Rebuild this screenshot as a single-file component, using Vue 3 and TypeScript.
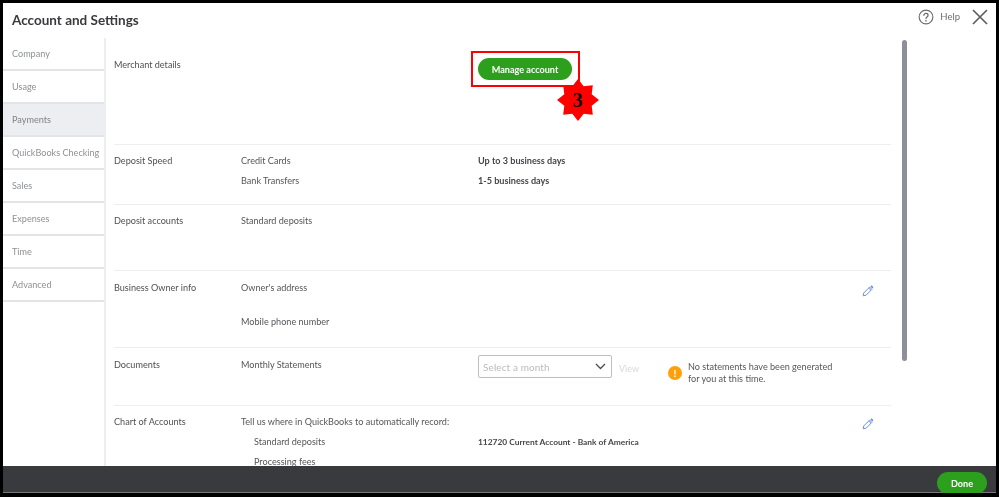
<script setup lang="ts">
const navItems = ['Company', 'Usage', 'Payments', 'QuickBooks Checking', 'Sales', 'Expenses', 'Time', 'Advanced']
const activeItem = 'Payments'
</script>

<template>
  <div class="frame">
    <header class="top">
      <h1 class="title">Account and Settings</h1>
      <div class="top-actions">
        <svg class="help-icon" width="16" height="16" viewBox="0 0 17 17" fill="none">
          <circle cx="8.5" cy="8.5" r="7.3" stroke="#6b6c72" stroke-width="1.2" />
          <path d="M6.3 6.7c0-1.3 1-2.1 2.2-2.1s2.2.8 2.2 2c0 1.900-2.200 1.800-2.200 3.600" stroke="#6b6c72" stroke-width="1.300" stroke-linecap="round" />
          <circle cx="8.500" cy="12.500" r=".9" fill="#6b6c72" />
        </svg>
        <span class="help">Help</span>
        <svg class="close-icon" width="16" height="16" viewBox="0 0 16 16" fill="none">
          <path d="M1 1l14 14M15 1L1 15" stroke="#5d5f66" stroke-width="1.700" />
        </svg>
      </div>
    </header>

    <div class="body">
      <nav class="side">
        <div
          v-for="item in navItems"
          :key="item"
          class="side-item"
          :class="{ active: item === activeItem }"
        >{{ item }}</div>
      </nav>

      <main class="content">
        <div class="rows">
          <section class="row row-merchant">
            <div class="label">Merchant details</div>
            <div></div>
            <div class="cell-action">
              <button class="green-btn" type="button">Manage account</button>
              <div class="callout"></div>
              <div class="star">
                <svg width="44" height="44" viewBox="0 0 44 44">
                  <polygon fill="#fe0000" points="22,1 27.700,8.300 36.800,7.200 35.700,16.300 43,22 35.700,27.700 36.800,36.800 27.700,35.700 22,43 16.300,35.700 7.200,36.800 8.300,27.700 1,22 8.300,16.300 7.200,7.200 16.300,8.300" />
                </svg>
                <span class="star-num">3</span>
              </div>
            </div>
          </section>

          <section class="row row-speed">
            <div class="label">Deposit Speed</div>
            <div class="stack">
              <div>Credit Cards</div>
              <div>Bank Transfers</div>
            </div>
            <div class="stack strong">
              <div>Up to 3 business days</div>
              <div>1-5 business days</div>
            </div>
          </section>

          <section class="row row-accounts">
            <div class="label">Deposit accounts</div>
            <div>Standard deposits</div>
            <div></div>
          </section>

          <section class="row row-owner">
            <div class="label">Business Owner info</div>
            <div class="stack wide">
              <div>Owner's address</div>
              <div>Mobile phone number</div>
            </div>
            <div class="edit-cell">
              <svg class="pencil" width="12" height="12" viewBox="0 0 12 12" fill="none">
                <path d="M1.200 10.800l.6-2.900 5.800-5.800 2.300 2.300-5.800 5.800zM6.700 3l2.300 2.300" stroke="#6f8fd8" stroke-width="1" stroke-linejoin="round" />
                <path d="M8.300 1.400l.7-.6c.4-.3.800-.3 1.100 0l1 1c.3.300.3.700 0 1l-.7.700z" fill="#6f8fd8" />
              </svg>
            </div>
          </section>

          <section class="row row-docs">
            <div class="label">Documents</div>
            <div>Monthly Statements</div>
            <div class="docs">
              <div class="select">
                <span>Select a month</span>
                <svg width="11" height="7" viewBox="0 0 11 7" fill="none">
                  <path d="M1 1l4.500 4.500L10 1" stroke="#4a4b50" stroke-width="1.300" />
                </svg>
              </div>
              <span class="view">View</span>
              <div class="notice">
                <span class="warn">!</span>
                <p>No statements have been generated<br />for you at this time.</p>
              </div>
            </div>
          </section>

          <section class="row row-chart">
            <div class="label">Chart of Accounts</div>
            <div class="chart-span">
              <div class="chart-head">
                <span>Tell us where in QuickBooks to automatically record:</span>
                <svg class="pencil" width="12" height="12" viewBox="0 0 12 12" fill="none">
                  <path d="M1.200 10.800l.6-2.900 5.800-5.800 2.300 2.300-5.800 5.800zM6.700 3l2.300 2.300" stroke="#6f8fd8" stroke-width="1" stroke-linejoin="round" />
                  <path d="M8.300 1.400l.7-.6c.4-.3.800-.3 1.100 0l1 1c.3.300.3.700 0 1l-.7.700z" fill="#6f8fd8" />
                </svg>
              </div>
              <div class="chart-line">
                <span class="sub">Standard deposits</span>
                <span class="strong account">112720 Current Account - Bank of America</span>
              </div>
              <div class="chart-line">
                <span class="sub">Processing fees</span>
              </div>
            </div>
          </section>
        </div>
        <div class="scroll-track"><div class="scroll-thumb"></div></div>
      </main>
    </div>

    <footer class="bottom">
      <button class="green-btn done" type="button">Done</button>
    </footer>
  </div>
</template>

<style>
html, body {
  margin: 0;
  background: #000;
}
</style>

<style scoped>
.frame {
  width: 999px;
  height: 497px;
  box-sizing: border-box;
  border-style: solid;
  border-color: #000;
  border-width: 3px 3px 4px 3px;
  background: #fff;
  display: grid;
  grid-template-rows: 35px 1fr 27px;
  font-family: Lato, "Open Sans", sans-serif;
  font-size: 9.1px;
  color: #55565b;
  overflow: hidden;
  filter: blur(0.3px);
}

.top {
  display: flex;
  align-items: center;
  justify-content: space-between;
  padding: 0 8px 0 9px;
}

.title {
  margin: 0;
  margin-top: -2px;
  font-size: 13.5px;
  font-weight: 700;
  color: #393a3d;
}

.top-actions {
  display: flex;
  align-items: center;
  margin-top: -8px;
}

.help {
  margin: 0 12px 0 6px;
  font-size: 9.5px;
  color: #6b6c72;
}

.body {
  display: flex;
  min-height: 0;
  overflow: hidden;
}

.side {
  width: 103px;
  box-sizing: border-box;
  flex: none;
  border-right: 2px solid #eceef1;
}

.side-item {
  height: 31px;
  padding-left: 9px;
  line-height: 31px;
  border-bottom: 2px solid #e3e4e7;
  color: #8d9096;
  white-space: nowrap;
}

.side-item.active {
  background: #eceef1;
  color: #818388;
}

.content {
  flex: 1;
  display: flex;
  min-width: 0;
}

.rows {
  width: 777px;
  margin-left: 8px;
  padding-top: 1px;
  flex: none;
}

.row {
  display: grid;
  grid-template-columns: 127px 237px 1fr;
  box-sizing: border-box;
  border-bottom: 1px solid #eceef1;
  padding-top: 6px;
  line-height: 20px;
}

.label {
  color: #4f5055;
}

.row-merchant {
  height: 106px;
  padding-top: 16px;
}

.row-speed {
  height: 60px;
}

.row-accounts {
  height: 66px;
}

.row-owner {
  height: 77px;
  padding-top: 7px;
}

.row-docs {
  height: 58px;
  padding-top: 7px;
}

.row-chart {
  border-bottom: 0;
}

.stack {
  display: flex;
  flex-direction: column;
}

.stack.wide {
  gap: 14px;
}

.strong {
  font-weight: 700;
  color: #45464b;
}

.account {
  font-size: 8.4px;
}

.cell-action {
  position: relative;
}

.green-btn {
  display: block;
  border: 0;
  padding: 0;
  border-radius: 11px;
  background: #2ca01c;
  color: #fff;
  font-family: inherit;
  font-size: 9.1px;
  font-weight: 700;
}

.cell-action .green-btn {
  width: 94px;
  height: 22px;
  margin-top: 3px;
}

.callout {
  position: absolute;
  left: -7px;
  top: -4px;
  width: 105px;
  height: 32px;
  border: 2px solid #fe0000;
}

.star {
  position: absolute;
  left: 78px;
  top: 23px;
  width: 44px;
  height: 44px;
}

.star svg {
  display: block;
}

.star-num {
  position: absolute;
  inset: 0;
  text-align: center;
  line-height: 44px;
  font-family: "Liberation Serif", serif;
  font-size: 20px;
  font-weight: 700;
  color: #000;
}

.edit-cell {
  display: flex;
  justify-content: flex-end;
  padding: 7px 17px 0 0;
}

.pencil {
  display: block;
}

.docs {
  display: flex;
  align-items: flex-start;
}

.select {
  box-sizing: border-box;
  width: 134px;
  height: 23px;
  display: flex;
  align-items: center;
  justify-content: space-between;
  padding: 0 5px 0 4px;
  border: 1px solid #babec5;
  border-radius: 2px;
  font-size: 10px;
  letter-spacing: 0.1px;
  color: #b9bbc0;
}

.view {
  margin-left: 7px;
  margin-top: 4px;
  font-size: 9px;
  color: #d4d7dc;
}

.notice {
  display: flex;
  align-items: center;
  margin: 6px 0 0 29px;
}

.notice p {
  margin: 0 0 0 6px;
  line-height: 12px;
}

.warn {
  width: 14px;
  height: 14px;
  border-radius: 50%;
  background: #ff9f0a;
  color: #fff;
  font-size: 10px;
  font-weight: 900;
  line-height: 14px;
  text-align: center;
}

.chart-span {
  grid-column: 2 / 4;
}

.chart-head {
  display: flex;
  justify-content: space-between;
  padding-right: 17px;
}

.chart-head .pencil {
  margin-top: 6px;
}

.chart-line {
  display: flex;
}

.sub {
  width: 224px;
  margin-left: 13px;
}

.scroll-track {
  margin-left: 11px;
  padding-top: 2px;
}

.scroll-thumb {
  width: 5px;
  height: 321px;
  border-radius: 3px;
  background: #8d9096;
}

.bottom {
  background: #393a3d;
  display: flex;
  justify-content: flex-end;
  align-items: flex-start;
  padding: 6px 9px 0 0;
  overflow: hidden;
  box-shadow: inset 0 -1px 0 #77787c;
}

.green-btn.done {
  width: 50px;
  height: 22px;
}
</style>
